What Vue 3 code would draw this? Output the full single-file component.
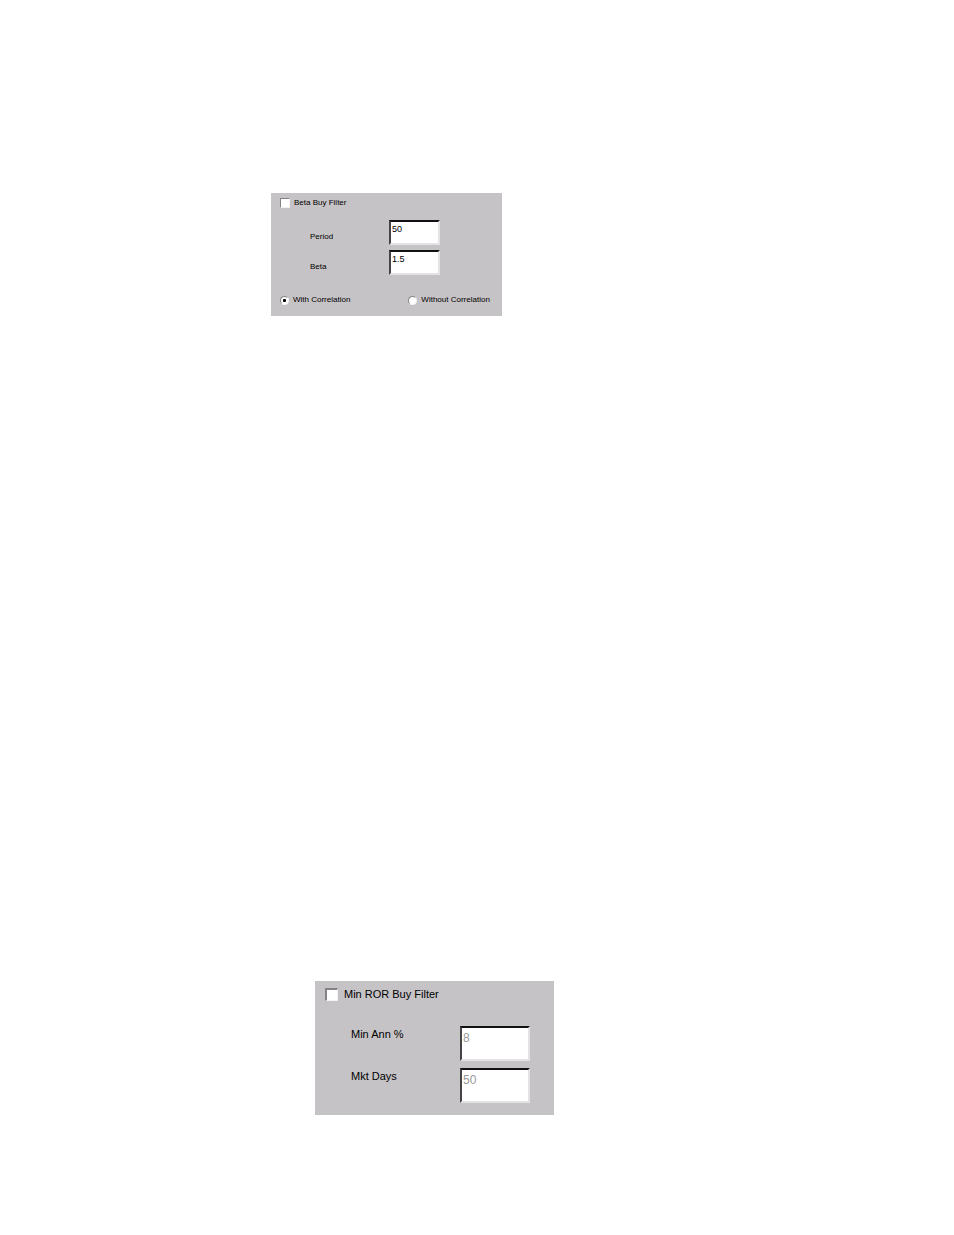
<template>
  <main class="page">
    <form class="panel beta" @submit.prevent>
      <label class="option">
        <input v-model="beta.enabled" class="check" type="checkbox" />
        <span>Beta Buy Filter</span>
      </label>
      <div class="fields">
        <div v-for="field in beta.fields" :key="field.id" class="field">
          <label :for="field.id">{{ field.label }}</label>
          <input :id="field.id" v-model="field.value" class="box" type="text" />
        </div>
      </div>
      <div class="choices">
        <label v-for="choice in choices" :key="choice" class="option">
          <input v-model="beta.correlation" class="radio" type="radio" name="correlation" :value="choice" />
          <span>{{ choice }}</span>
        </label>
      </div>
    </form>

    <form class="panel ror" @submit.prevent>
      <label class="option">
        <input v-model="ror.enabled" class="check" type="checkbox" />
        <span>Min ROR Buy Filter</span>
      </label>
      <div class="fields">
        <div v-for="field in ror.fields" :key="field.id" class="field">
          <label :for="field.id">{{ field.label }}</label>
          <input :id="field.id" v-model="field.value" class="box" type="text" :disabled="!ror.enabled" />
        </div>
      </div>
    </form>
  </main>
</template>

<script setup>
import { reactive } from "vue";

const choices = ["With Correlation", "Without Correlation"];

const beta = reactive({
  enabled: false,
  correlation: "With Correlation",
  fields: [
    { id: "period", label: "Period", value: "50" },
    { id: "beta", label: "Beta", value: "1.5" }
  ]
});

const ror = reactive({
  enabled: false,
  fields: [
    { id: "min-ann", label: "Min Ann %", value: "8" },
    { id: "mkt-days", label: "Mkt Days", value: "50" }
  ]
});
</script>

<style>
body {
  margin: 0;
  background: #fff;
}
</style>

<style scoped>
* {
  box-sizing: border-box;
}

.page {
  display: flex;
  flex-direction: column;
  align-items: flex-start;
  gap: 665px;
  padding: 193px 24px 120px 271px;
  font-family: "Liberation Sans", Arial, sans-serif;
  color: #000;
}

.panel {
  background: #c6c3c6;
}

.option {
  display: flex;
  align-items: center;
  white-space: nowrap;
}

.check,
.radio,
.box {
  appearance: none;
  margin: 0;
  background: #fff;
}

.check {
  border: 1px solid;
  border-color: #848284 #f4f2f4 #f4f2f4 #848284;
}

.check:checked {
  background: #333;
}

.fields {
  display: flex;
  flex-direction: column;
}

.field {
  display: flex;
}

.box {
  border: 2px solid;
  border-color: #111 #e4e2e4 #e4e2e4 #444;
  border-radius: 0;
  outline: none;
  font-family: inherit;
  color: #000;
}

.box:disabled {
  color: #999;
}

.beta {
  padding: 4px 12px 10px 9px;
  font-size: 8px;
  line-height: 12px;
}

.beta .option {
  gap: 4px;
}

.beta .check {
  width: 10px;
  height: 10px;
}

.beta .fields {
  gap: 5px;
  padding: 11px 0 0 30px;
}

.beta .field {
  align-items: center;
}

.beta .field label {
  width: 79px;
  padding-top: 8px;
}

.beta .box {
  width: 51px;
  height: 25px;
  padding: 0 1px 8px;
  font-size: 9px;
}

.radio {
  display: grid;
  place-items: center;
  width: 9px;
  height: 9px;
  border: 1px solid;
  border-color: #848284 #f4f2f4 #f4f2f4 #848284;
  border-radius: 50%;
}

.radio:checked::before {
  content: "";
  width: 3px;
  height: 3px;
  border-radius: 1px;
  background: #000;
}

.choices {
  display: flex;
  gap: 58px;
  padding-top: 19px;
}

.ror {
  margin-left: 44px;
  padding: 5px 24px 12px 10px;
  font-size: 11px;
  line-height: 16px;
}

.ror .option {
  gap: 6px;
}

.ror .check {
  width: 13px;
  height: 13px;
  border-width: 2px 1px 1px 2px;
}

.ror .fields {
  gap: 7px;
  padding: 24px 0 0 26px;
}

.ror .field label {
  width: 109px;
}

.ror .box {
  width: 70px;
  height: 35px;
  padding: 0 1px 12px;
  font-size: 12px;
}
</style>
